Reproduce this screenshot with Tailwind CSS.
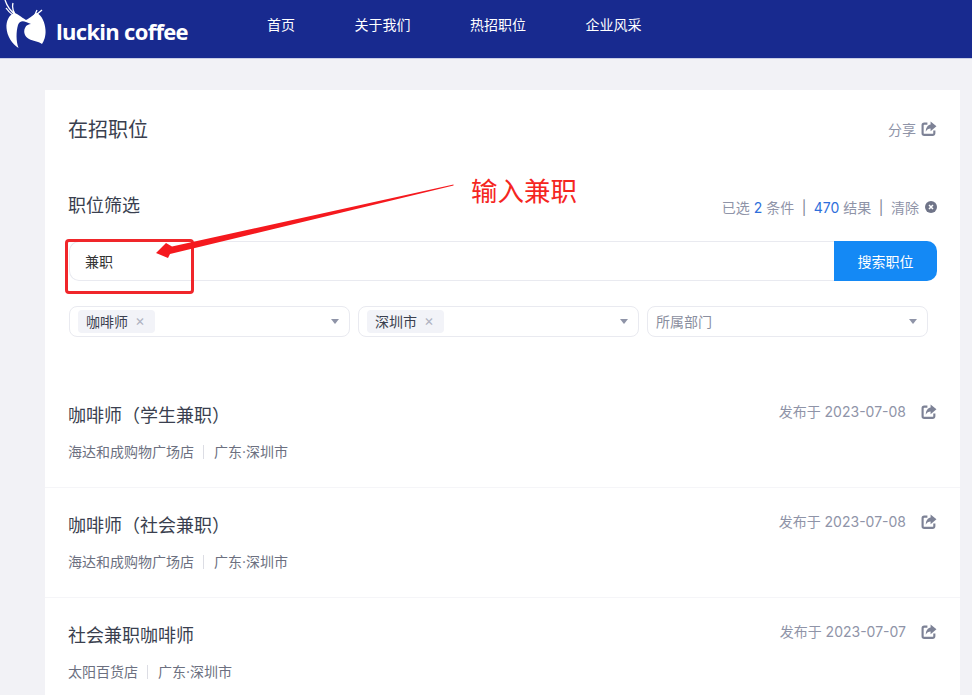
<!DOCTYPE html>
<html lang="zh-CN">
<head>
    <meta charset="UTF-8">
    <title>luckin coffee 在招职位</title>
    <script src="https://cdn.jsdelivr.net/npm/@tailwindcss/browser@4"></script>
</head>
<body class="relative h-[695px] overflow-hidden bg-[#f2f2f6] font-['Inter','Noto_Sans_CJK_SC',sans-serif] text-[#3a3f4f]">
    <!-- Header -->
    <header class="flex h-[58px] items-start bg-[#182a8f] shadow-[0_1px_0_#c9cde6]">
        <svg class="h-[50px] w-[50px] shrink-0" viewBox="0 0 50 50" fill="#fff">
            <path d="M5 0C7 6 10 11 16 15M13 3C12 7 13 11 15 14M6 8C8 11 10 13 14 16M42 10C39 13 36 15 32 17M37 10C36 13 35 15 33 17" fill="none" stroke="#fff" stroke-width="1.300"/>
            <path d="M14 13C17 13 21 17 26 20 30 18 34 14 37 13 42 16 45 22 45.500 30 46 36 44 41 42 44 38 41 33 41 29 39 25 37 23 32 25 28 26 25 29 24 31 24L26 22C22 20 19 22 18 25 16 32 16 41 18.500 48 12 44 7 36 6.500 28 6 21 9 15 14 13z"/>
        </svg>
        <span class="ml-[6px] mt-[16px] shrink-0 whitespace-nowrap font-['Open_Sans',sans-serif] text-[22px] leading-[30px] font-bold tracking-[-0.7px] text-white">luckin coffee</span>
        <nav class="ml-[79px] mt-[15px] flex gap-[59.500px] text-[14px] leading-[20px] text-white">
            <a>首页</a>
            <a>关于我们</a>
            <a>热招职位</a>
            <a>企业风采</a>
        </nav>
    </header>

    <!-- Main card -->
    <main class="ml-[45px] mt-[32px] w-[915px] bg-white">
        <div class="pl-[23px] pr-[23px] pt-[25px]">
            <div class="flex h-[30px] items-center justify-between">
                <h1 class="text-[20px] leading-[30px] font-normal">在招职位</h1>
                <div class="mb-[2px] flex items-center gap-[5px] text-[14px] text-[#8f94a8]">
                    分享
                    <svg class="h-[16px] w-[16px]" viewBox="0 0 15 15"><path d="M6 2.500H3a1.500 1.500 0 0 0-1.500 1.500v7.500A1.500 1.500 0 0 0 3 13h8a1.500 1.500 0 0 0 1.500-1.500V9" fill="none" stroke="#7d8296" stroke-width="2"/><path d="M9 .5l5.500 4.500-5.500 4.500V7C7 7 5.500 7.800 4.500 10 4.500 6 6.500 3.500 9 3.200z" fill="#7d8296"/></svg>
                </div>
            </div>

            <div class="mt-[46px] flex h-[30px] items-center justify-between">
                <h2 class="text-[18px] leading-[30px] font-normal">职位筛选</h2>
                <div class="mt-[2px] flex items-center text-[14px] text-[#8f94a8]">
                    已选&nbsp;<span class="text-[#2f6fdb]">2</span>&nbsp;条件
                    <span class="mx-[7.500px] text-[#7d8296]">|</span>
                    <span class="text-[#2f6fdb]">470</span>&nbsp;结果
                    <span class="mx-[7.500px] text-[#7d8296]">|</span>
                    清除
                    <svg class="ml-[6px] h-[12px] w-[12px]" viewBox="0 0 12 12"><circle cx="6" cy="6" r="6" fill="#6f7488"/><path d="M4 4l4 4M8 4l-4 4" stroke="#fff" stroke-width="1.500"/></svg>
                </div>
            </div>

            <div class="mt-[20px] ml-px flex h-[40px]">
                <div class="flex flex-1 items-center rounded-l-[10px] border border-r-0 border-[#e9eaf0] pl-[15px] text-[14px] text-[#333]">兼职</div>
                <button class="w-[103px] rounded-r-[10px] bg-[#1489f5] text-[14px] text-white">搜索职位</button>
            </div>

            <div class="mt-[25px] ml-px flex gap-[8px] text-[14px]">
                <div class="flex h-[31px] w-[281px] items-center justify-between rounded-[8px] border border-[#e9eaf0] pl-[8px] pr-[10px]">
                    <span class="flex h-[23px] items-center rounded-[4px] bg-[#f2f3f8] pl-[8px] pr-[10px]">咖啡师<span class="ml-[7px] text-[15px] text-[#b0b4c2]">×</span></span>
                    <span class="h-0 w-0 border-x-[4.500px] border-t-[5px] border-x-transparent border-t-[#8f94a8]"></span>
                </div>
                <div class="flex h-[31px] w-[281px] items-center justify-between rounded-[8px] border border-[#e9eaf0] pl-[8px] pr-[10px]">
                    <span class="flex h-[23px] items-center rounded-[4px] bg-[#f2f3f8] pl-[8px] pr-[10px]">深圳市<span class="ml-[7px] text-[15px] text-[#b0b4c2]">×</span></span>
                    <span class="h-0 w-0 border-x-[4.500px] border-t-[5px] border-x-transparent border-t-[#8f94a8]"></span>
                </div>
                <div class="flex h-[31px] w-[281px] items-center justify-between rounded-[8px] border border-[#e9eaf0] pl-[8px] pr-[10px] text-[#8a8e9e]">
                    所属部门
                    <span class="h-0 w-0 border-x-[4.500px] border-t-[5px] border-x-transparent border-t-[#8f94a8]"></span>
                </div>
            </div>
        </div>

        <!-- Job list -->
        <ul class="mt-[41px]">
            <li class="h-[110px] border-b border-[#f5f5f8] px-[23px] pt-[23px]">
                <div class="flex items-start justify-between">
                    <h3 class="text-[18px] leading-[30px] font-normal">咖啡师（学生兼职）</h3>
                    <div class="-mt-px flex items-center text-[14px] leading-[24px] text-[#8f94a8]">发布于 2023-07-08
                        <svg class="ml-[15px] h-[16px] w-[16px]" viewBox="0 0 15 15"><path d="M6 2.500H3a1.500 1.500 0 0 0-1.500 1.500v7.500A1.500 1.500 0 0 0 3 13h8a1.500 1.500 0 0 0 1.500-1.500V9" fill="none" stroke="#7d8296" stroke-width="2"/><path d="M9 .5l5.500 4.500-5.500 4.500V7C7 7 5.500 7.800 4.500 10 4.500 6 6.500 3.500 9 3.200z" fill="#7d8296"/></svg>
                    </div>
                </div>
                <p class="mt-[11px] flex items-center text-[14px] leading-[20px] text-[#6c7080]">海达和成购物广场店<span class="ml-[9px] mr-[10px] h-[14px] w-px bg-[#dcdde4]"></span>广东·深圳市</p>
            </li>
            <li class="h-[110px] border-b border-[#f5f5f8] px-[23px] pt-[23px]">
                <div class="flex items-start justify-between">
                    <h3 class="text-[18px] leading-[30px] font-normal">咖啡师（社会兼职）</h3>
                    <div class="-mt-px flex items-center text-[14px] leading-[24px] text-[#8f94a8]">发布于 2023-07-08
                        <svg class="ml-[15px] h-[16px] w-[16px]" viewBox="0 0 15 15"><path d="M6 2.500H3a1.500 1.500 0 0 0-1.500 1.500v7.500A1.500 1.500 0 0 0 3 13h8a1.500 1.500 0 0 0 1.500-1.500V9" fill="none" stroke="#7d8296" stroke-width="2"/><path d="M9 .5l5.500 4.500-5.500 4.500V7C7 7 5.500 7.800 4.500 10 4.500 6 6.500 3.500 9 3.200z" fill="#7d8296"/></svg>
                    </div>
                </div>
                <p class="mt-[11px] flex items-center text-[14px] leading-[20px] text-[#6c7080]">海达和成购物广场店<span class="ml-[9px] mr-[10px] h-[14px] w-px bg-[#dcdde4]"></span>广东·深圳市</p>
            </li>
            <li class="h-[110px] px-[23px] pt-[23px]">
                <div class="flex items-start justify-between">
                    <h3 class="text-[18px] leading-[30px] font-normal">社会兼职咖啡师</h3>
                    <div class="-mt-px flex items-center text-[14px] leading-[24px] text-[#8f94a8]">发布于 2023-07-07
                        <svg class="ml-[15px] h-[16px] w-[16px]" viewBox="0 0 15 15"><path d="M6 2.500H3a1.500 1.500 0 0 0-1.500 1.500v7.500A1.500 1.500 0 0 0 3 13h8a1.500 1.500 0 0 0 1.500-1.500V9" fill="none" stroke="#7d8296" stroke-width="2"/><path d="M9 .5l5.500 4.500-5.500 4.500V7C7 7 5.500 7.800 4.500 10 4.500 6 6.500 3.500 9 3.200z" fill="#7d8296"/></svg>
                    </div>
                </div>
                <p class="mt-[11px] flex items-center text-[14px] leading-[20px] text-[#6c7080]">太阳百货店<span class="ml-[9px] mr-[10px] h-[14px] w-px bg-[#dcdde4]"></span>广东·深圳市</p>
            </li>
        </ul>
    </main>

    <!-- Red annotation drawn over the page -->
    <svg class="absolute left-0 top-0 h-[695px] w-[972px]" viewBox="0 0 972 695" fill="none">
        <rect x="66.500" y="240.500" width="126" height="52" rx="2.500" stroke="#f0262a" stroke-width="3"/>
        <path d="M453.500 184.500L172 246.500 166 243 156 253 168 258 170 254 453.500 185.500z" fill="#f5191e"/>
    </svg>
    <span class="absolute left-[471px] top-[172px] text-[26.500px] leading-[38px] text-[#f5261f]">输入兼职</span>
</body>
</html>
